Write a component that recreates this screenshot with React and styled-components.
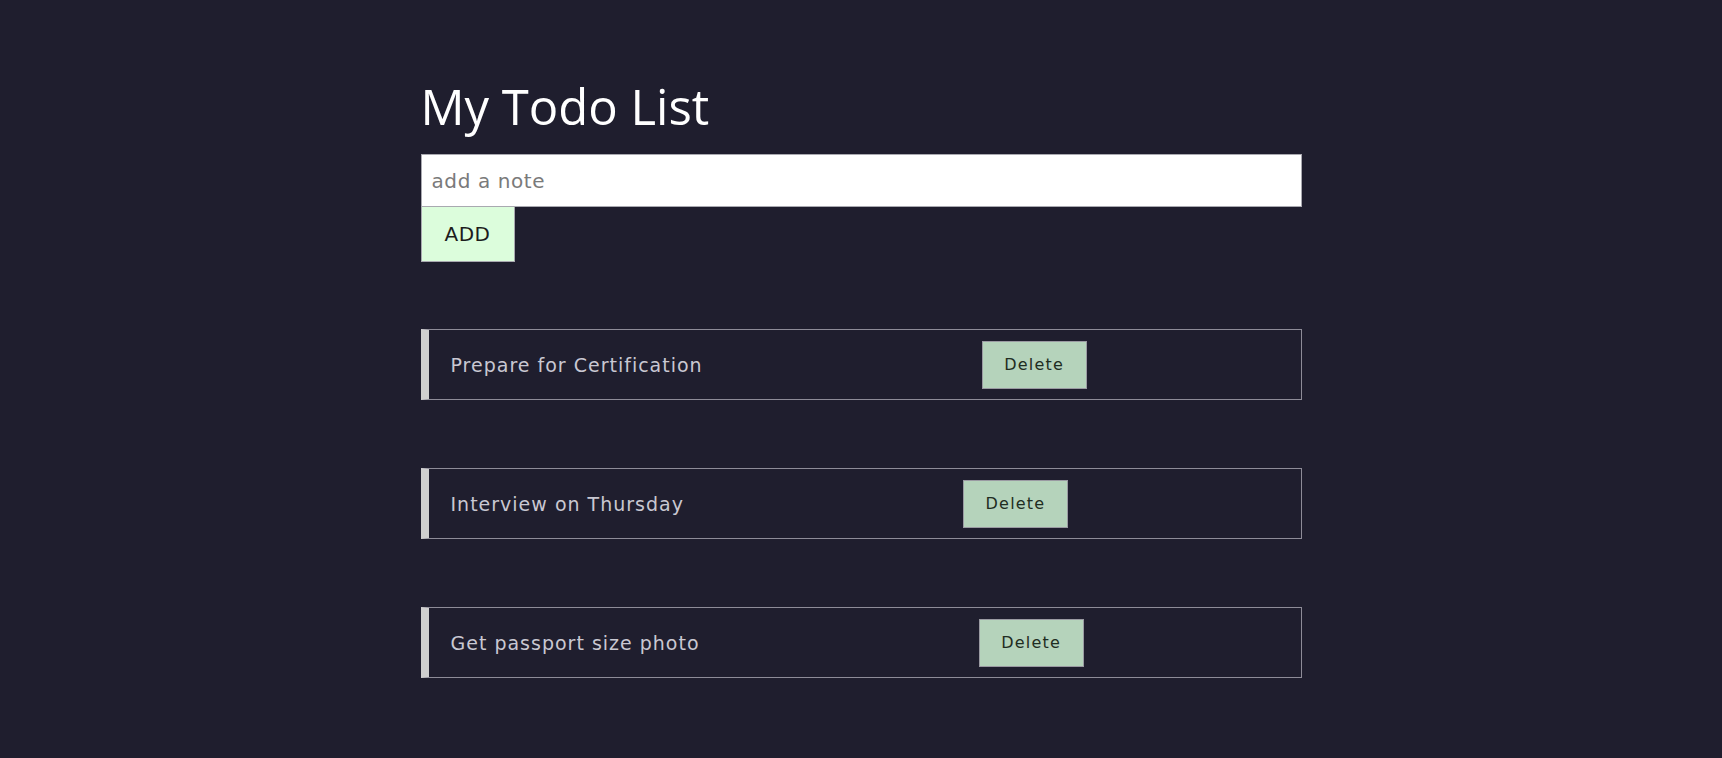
import React, { useState } from "react";
import styled, { createGlobalStyle } from "styled-components";

const GlobalStyle = createGlobalStyle`
  html, body {
    margin: 0;
    padding: 0;
    background: #1f1e2e;
    min-height: 100%;
  }
`;

const initialTodos = [
  { id: 1, text: "Prepare for Certification" },
  { id: 2, text: "Interview on Thursday" },
  { id: 3, text: "Get passport size photo" },
];

function App() {
  const [todos, setTodos] = useState(initialTodos);
  const [note, setNote] = useState("");

  function addTodo() {
    if (!note.trim()) return;
    setTodos([...todos, { id: Date.now(), text: note }]);
    setNote("");
  }

  return (
    <>
      <GlobalStyle />
      <Page>
        <Wrapper>
          <Title>My Todo List</Title>
          <NoteInput
            placeholder="add a note"
            value={note}
            onChange={(e) => setNote(e.target.value)}
          />
          <AddButton onClick={addTodo}>ADD</AddButton>
          <List>
            {todos.map((todo) => (
              <Item key={todo.id}>
                <ItemText>{todo.text}</ItemText>
                <DeleteButton
                  onClick={() => setTodos(todos.filter((t) => t.id !== todo.id))}
                >
                  Delete
                </DeleteButton>
              </Item>
            ))}
          </List>
        </Wrapper>
      </Page>
    </>
  );
}

export default App;

const Page = styled.div`
  min-height: 758px;
  background: #1f1e2e;
  display: flex;
  justify-content: center;
  padding-top: 72px;
  box-sizing: border-box;
`;

const Wrapper = styled.div`
  width: 881px;
  display: flex;
  flex-direction: column;
  align-items: flex-start;
`;

const Title = styled.h1`
  margin: 0 0 14px 0;
  font-family: "Open Sans", "Noto Sans", sans-serif;
  font-weight: 400;
  font-size: 49px;
  line-height: 68px;
  color: #ffffff;
`;

const NoteInput = styled.input`
  width: 100%;
  height: 53px;
  box-sizing: border-box;
  border: 1px solid #a9a9b0;
  background: #ffffff;
  padding: 0 10px;
  font-family: "DejaVu Sans", sans-serif;
  font-size: 20px;
  letter-spacing: 0.6px;
  color: #333;
  outline: none;

  &::placeholder {
    color: #7a7a7a;
  }
`;

const AddButton = styled.button`
  width: 94px;
  height: 55px;
  box-sizing: border-box;
  background: #dcfddc;
  border: 1px solid #a9a9b0;
  border-top: none;
  font-family: "DejaVu Sans", sans-serif;
  font-size: 20px;
  letter-spacing: 0.5px;
  color: #1c1c1c;
  cursor: pointer;
`;

const List = styled.div`
  width: 100%;
  display: flex;
  flex-direction: column;
  gap: 68px;
  margin-top: 67px;
`;

const Item = styled.div`
  height: 71px;
  box-sizing: border-box;
  display: flex;
  align-items: center;
  border: 1px solid #8e8c98;
  border-left: 8px solid #cfcfcf;
  padding-left: 22px;
`;

const ItemText = styled.span`
  font-family: "DejaVu Sans", sans-serif;
  font-size: 19px;
  letter-spacing: 1px;
  color: #c9c8d2;
`;

const DeleteButton = styled.button`
  margin-left: 279px;
  width: 105px;
  height: 48px;
  background: #b5d3bb;
  border: 1px solid #9a9aa2;
  font-family: "DejaVu Sans", sans-serif;
  font-size: 16px;
  letter-spacing: 1.2px;
  color: #1f2d22;
  cursor: pointer;
`;
